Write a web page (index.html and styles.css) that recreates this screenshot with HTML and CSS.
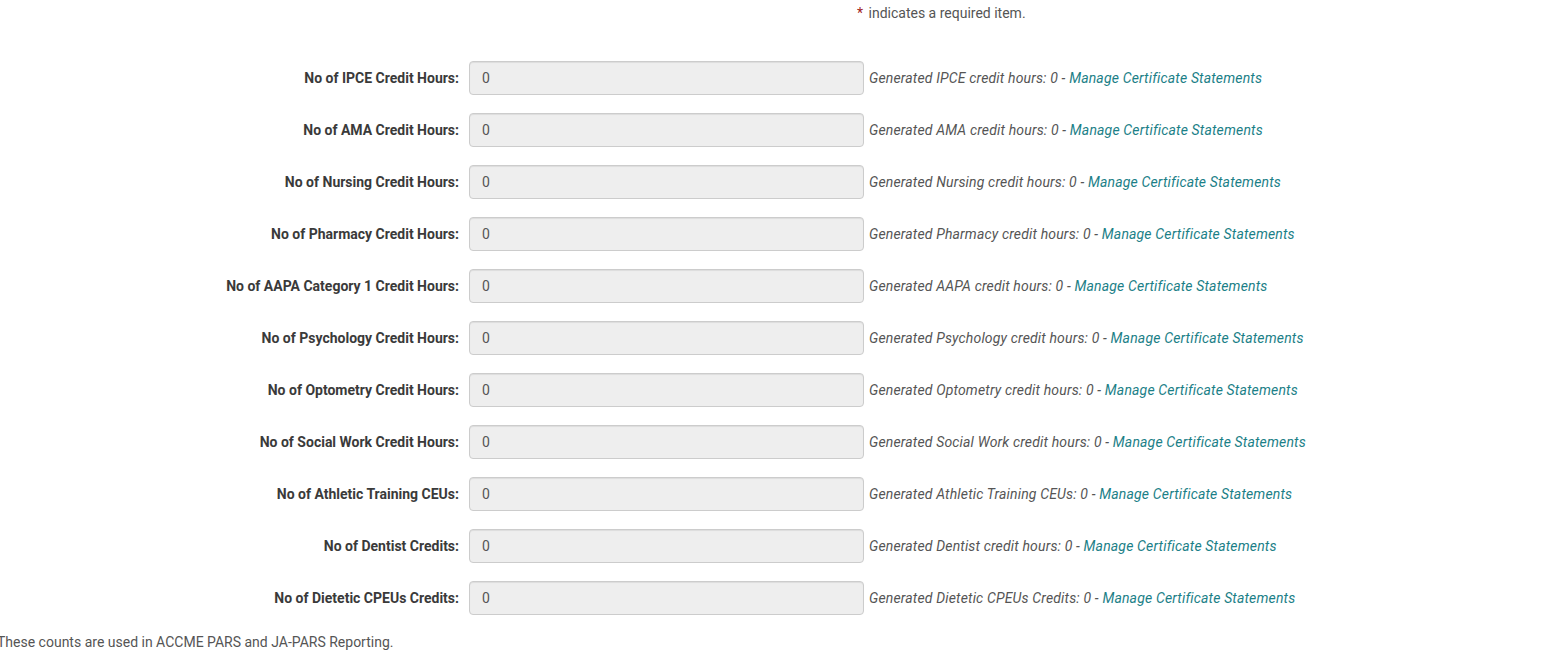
FILE: index.html
```html
<!DOCTYPE html>
<html>
<head>
<meta charset="utf-8">
<link rel="stylesheet" href="styles.css">
</head>
<body>
<div class="note"><span class="req">*</span> indicates a required item.</div>
<div class="form">
  <div class="row"><label class="lbl">No of IPCE Credit Hours:</label><div class="input">0</div><div class="help">Generated IPCE credit hours: 0 - <a href="#">Manage Certificate Statements</a></div></div>
  <div class="row"><label class="lbl">No of AMA Credit Hours:</label><div class="input">0</div><div class="help">Generated AMA credit hours: 0 - <a href="#">Manage Certificate Statements</a></div></div>
  <div class="row"><label class="lbl">No of Nursing Credit Hours:</label><div class="input">0</div><div class="help">Generated Nursing credit hours: 0 - <a href="#">Manage Certificate Statements</a></div></div>
  <div class="row"><label class="lbl">No of Pharmacy Credit Hours:</label><div class="input">0</div><div class="help">Generated Pharmacy credit hours: 0 - <a href="#">Manage Certificate Statements</a></div></div>
  <div class="row"><label class="lbl">No of AAPA Category 1 Credit Hours:</label><div class="input">0</div><div class="help">Generated AAPA credit hours: 0 - <a href="#">Manage Certificate Statements</a></div></div>
  <div class="row"><label class="lbl">No of Psychology Credit Hours:</label><div class="input">0</div><div class="help">Generated Psychology credit hours: 0 - <a href="#">Manage Certificate Statements</a></div></div>
  <div class="row"><label class="lbl">No of Optometry Credit Hours:</label><div class="input">0</div><div class="help">Generated Optometry credit hours: 0 - <a href="#">Manage Certificate Statements</a></div></div>
  <div class="row"><label class="lbl">No of Social Work Credit Hours:</label><div class="input">0</div><div class="help">Generated Social Work credit hours: 0 - <a href="#">Manage Certificate Statements</a></div></div>
  <div class="row"><label class="lbl">No of Athletic Training CEUs:</label><div class="input">0</div><div class="help">Generated Athletic Training CEUs: 0 - <a href="#">Manage Certificate Statements</a></div></div>
  <div class="row"><label class="lbl">No of Dentist Credits:</label><div class="input">0</div><div class="help">Generated Dentist credit hours: 0 - <a href="#">Manage Certificate Statements</a></div></div>
  <div class="row"><label class="lbl">No of Dietetic CPEUs Credits:</label><div class="input">0</div><div class="help">Generated Dietetic CPEUs Credits: 0 - <a href="#">Manage Certificate Statements</a></div></div>
</div>
<p class="foot">These counts are used in ACCME PARS and JA-PARS Reporting.</p>
</body>
</html>
```
FILE: styles.css
```css
html, body {
  margin: 0;
  padding: 0;
  background: #fff;
}
body {
  font-family: Roboto, "Liberation Sans", Arial, sans-serif;
  font-size: 14px;
  line-height: 20px;
  color: #555;
}
.note {
  margin-top: 3px;
  padding-left: 857px;
  height: 20px;
}
.req {
  color: #a01c1c;
  margin-right: 2px;
}
.form {
  margin-top: 38px;
  display: flex;
  flex-direction: column;
  gap: 18px;
}
.row {
  display: grid;
  grid-template-columns: 459px 395px auto;
  align-items: center;
  height: 34px;
}
.lbl {
  text-align: right;
  font-weight: bold;
  color: #3a3a3a;
  padding-right: 10px;
  box-sizing: border-box;
  width: 469px;
  grid-column: 1;
  margin-right: -10px;
}
.input {
  grid-column: 2;
  margin-left: 10px;
  box-sizing: border-box;
  height: 34px;
  width: 395px;
  background: #eee;
  border: 1px solid #ccc;
  border-radius: 4px;
  padding: 6px 12px;
  color: #555;
  box-shadow: inset 0 1px 1px rgba(0,0,0,0.075);
}
.help {
  grid-column: 3;
  margin-left: 15px;
  font-style: italic;
  letter-spacing: 0.16px;
  color: #555;
  white-space: nowrap;
}
.help a {
  color: #1b8087;
  text-decoration: none;
}
.foot {
  margin: 17px 0 0 -3px;
  color: #555;
}
```
